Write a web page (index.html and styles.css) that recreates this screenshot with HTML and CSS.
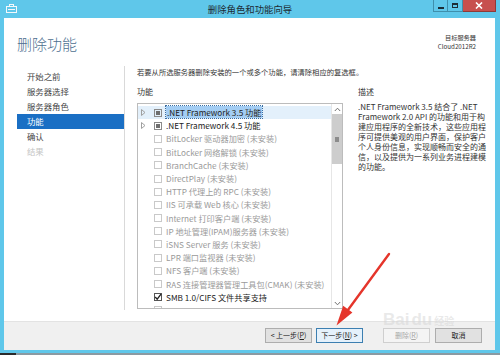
FILE: index.html
```html
<!DOCTYPE html>
<html lang="zh-CN">
<head>
<meta charset="utf-8">
<title>删除角色和功能向导</title>
<link rel="stylesheet" href="styles.css">
</head>
<body>
<div class="window">
  <div class="titlebar">
    <div class="tb-left">
      <svg class="app-icon" width="11" height="9" viewBox="0 0 11 9">
        <rect x="0.5" y="2.5" width="10" height="6" fill="none" stroke="#f4f8fb" stroke-width="1"/>
        <rect x="3.5" y="0.5" width="4" height="2" fill="none" stroke="#f4f8fb" stroke-width="1"/>
        <rect x="2" y="5" width="7" height="1" fill="#f4f8fb"/>
      </svg>
    </div>
    <div class="tb-title">删除角色和功能向导</div>
    <div class="tb-right">
      <div class="wbtn wmin"><span class="glyph-min"></span></div>
      <div class="wbtn wmax"><span class="glyph-max"></span></div>
      <div class="wbtn wclose">
        <svg width="8" height="7" viewBox="0 0 8 7"><path d="M1 0.5 L7 6.5 M7 0.5 L1 6.5" stroke="#fff" stroke-width="1.6"/></svg>
      </div>
    </div>
  </div>

  <div class="client">
    <div class="main">
      <div class="header">
        <h1 class="heading">删除功能</h1>
        <div class="server">
          <div>目标服务器</div>
          <div>Cloud2012R2</div>
        </div>
      </div>
      <div class="body">
        <ul class="nav">
          <li>开始之前</li>
          <li>服务器选择</li>
          <li>服务器角色</li>
          <li class="active">功能</li>
          <li>确认</li>
          <li class="disabled">结果</li>
        </ul>
        <div class="content">
          <p class="intro">若要从所选服务器删除安装的一个或多个功能，请清除相应的复选框。</p>
          <div class="cols">
            <div class="col-list">
              <div class="label">功能</div>
              <div class="listbox">
                <div class="rows">
                  <div class="row selected"><span class="exp"><svg width="5" height="7" viewBox="0 0 5 7"><path d="M0.5 0.5 L4 3.5 L0.5 6.5 Z" fill="none" stroke="#a0a0a0" stroke-width="1"/></svg></span><span class="cb partial"></span><span class="txt"><span class="sel-txt">.NET Framework 3.5 功能</span></span></div>
                  <div class="row"><span class="exp"><svg width="5" height="7" viewBox="0 0 5 7"><path d="M0.5 0.5 L4 3.5 L0.5 6.5 Z" fill="none" stroke="#a0a0a0" stroke-width="1"/></svg></span><span class="cb partial"></span><span class="txt">.NET Framework 4.5 功能</span></div>
                  <div class="row dim"><span class="exp"></span><span class="cb"></span><span class="txt">BitLocker 驱动器加密 (未安装)</span></div>
                  <div class="row dim"><span class="exp"></span><span class="cb"></span><span class="txt">BitLocker 网络解锁 (未安装)</span></div>
                  <div class="row dim"><span class="exp"></span><span class="cb"></span><span class="txt">BranchCache (未安装)</span></div>
                  <div class="row dim"><span class="exp"></span><span class="cb"></span><span class="txt">DirectPlay (未安装)</span></div>
                  <div class="row dim"><span class="exp"></span><span class="cb"></span><span class="txt">HTTP 代理上的 RPC (未安装)</span></div>
                  <div class="row dim"><span class="exp"></span><span class="cb"></span><span class="txt">IIS 可承载 Web 核心 (未安装)</span></div>
                  <div class="row dim"><span class="exp"></span><span class="cb"></span><span class="txt">Internet 打印客户端 (未安装)</span></div>
                  <div class="row dim"><span class="exp"></span><span class="cb"></span><span class="txt">IP 地址管理(IPAM)服务器 (未安装)</span></div>
                  <div class="row dim"><span class="exp"></span><span class="cb"></span><span class="txt">iSNS Server 服务 (未安装)</span></div>
                  <div class="row dim"><span class="exp"></span><span class="cb"></span><span class="txt">LPR 端口监视器 (未安装)</span></div>
                  <div class="row dim"><span class="exp"></span><span class="cb"></span><span class="txt">NFS 客户端 (未安装)</span></div>
                  <div class="row dim"><span class="exp"></span><span class="cb"></span><span class="txt">RAS 连接管理器管理工具包(CMAK) (未安装)</span></div>
                  <div class="row"><span class="exp"></span><span class="cb checked"><svg width="8" height="8" viewBox="0 0 8 8"><path d="M1.2 4 L3.2 6.2 L7 1.2" fill="none" stroke="#222" stroke-width="1.3"/></svg></span><span class="txt">SMB 1.0/CIFS 文件共享支持</span></div>
                  <div class="row dim"><span class="exp"></span><span class="cb"></span></div>
                </div>
                <div class="scrollbar">
                  <div class="sb-btn"><svg width="7" height="5" viewBox="0 0 7 5"><path d="M0.8 4 L3.5 1.2 L6.2 4" fill="none" stroke="#707070" stroke-width="1"/></svg></div>
                  <div class="sb-thumb"><span class="grip"></span></div>
                  <div class="sb-track"></div>
                  <div class="sb-btn"><svg width="7" height="5" viewBox="0 0 7 5"><path d="M0.8 1 L3.5 3.8 L6.2 1" fill="none" stroke="#707070" stroke-width="1"/></svg></div>
                </div>
              </div>
            </div>
            <div class="col-desc">
              <div class="label">描述</div>
              <p class="desc">.NET Framework 3.5 结合了 .NET Framework 2.0 API 的功能和用于构建应用程序的全新技术，这些应用程序可提供美观的用户界面，保护客户个人身份信息，实现顺畅而安全的通信，以及提供为一系列业务进程建模的功能。</p>
            </div>
          </div>
        </div>
      </div>
    </div>
    <div class="footer">
      <div class="btn">&lt; 上一步(<u>P</u>)</div>
      <div class="btn primary">下一步(<u>N</u>) &gt;</div>
      <div class="btn disabled-btn gap-big">删除(<u>R</u>)</div>
      <div class="btn gap-small">取消</div>
    </div>
  </div>
  <div class="taskbar"></div>

  <div class="watermark"><span class="wm-big">Bai</span><span class="wm-du">du</span><span class="wm-small">经验</span></div>

  <svg class="arrow" width="500" height="355" viewBox="0 0 500 355">
    <path d="M389 254 L345 314" stroke="#e5352b" stroke-width="2.4" stroke-linecap="round"/>
    <polygon points="336.5,325.5 343.2,305.8 352.4,312.6" fill="#e5352b"/>
  </svg>
</div>
</body>
</html>
```
FILE: styles.css
```css
* { box-sizing: border-box; }
html, body { margin: 0; padding: 0; }
body {
  width: 500px;
  height: 355px;
  overflow: hidden;
  background: #5fc7ea;
  font-family: "Noto Sans CJK SC", "Noto Sans", sans-serif;
  color: #222;
}
.window {
  position: relative;
  width: 500px;
  height: 355px;
  display: flex;
  flex-direction: column;
}
.titlebar {
  height: 18px;
  display: grid;
  grid-template-columns: 1fr auto 1fr;
  align-items: start;
}
.tb-left { padding: 4px 0 0 6px; }
.app-icon { display: block; }
.tb-title {
  font-size: 9.4px;
  line-height: 18px;
  color: #1d2b33;
}
.tb-right {
  display: flex;
  justify-content: flex-end;
  padding-right: 4px;
}
.wbtn {
  height: 12px;
  display: flex;
  align-items: center;
  justify-content: center;
}
.wmin { width: 15px; border: 1px solid #3f8fac; border-top: 0; }
.wmax { width: 15px; border: 1px solid #3f8fac; border-top: 0; border-left: 0; }
.wclose { width: 33px; background: #c7504e; border: 1px solid #8f3a38; border-top: 0; border-left: 0; }
.glyph-min { width: 6px; height: 2px; background: #1c2d36; margin-top: 4px; }
.glyph-max { width: 6px; height: 5px; border: 1px solid #1c2d36; border-top-width: 2px; }

.client {
  height: 332px;
  margin: 0 5px 0 4px;
  display: flex;
  flex-direction: column;
  background: #fff;
}
.main { flex: 1; }
.header {
  height: 48px;
  display: flex;
  justify-content: space-between;
  align-items: flex-start;
  padding: 0 19px 0 13px;
}
.heading {
  margin: 17px 0 0;
  font-weight: 300;
  font-size: 15px;
  line-height: 18px;
  color: #4d6f8f;
}
.server {
  margin-top: 15px;
  text-align: right;
  font-size: 6.2px;
  line-height: 9px;
  color: #333;
}
.body {
  display: flex;
  height: 244px;
}
.nav {
  list-style: none;
  margin: 0 0 0 13px;
  padding: 3px 0 0;
  width: 108px;
  border-right: 1px solid #d9d9d9;
  font-size: 8.4px;
}
.nav li {
  height: 15px;
  line-height: 15px;
  padding-left: 10px;
  color: #444;
}
.nav li.active { background: #1a6fc4; color: #fff; }
.nav li.disabled { color: #c4c4c4; }
.content {
  flex: 1;
  padding-left: 12px;
}
.intro {
  margin: 0;
  height: 12px;
  font-size: 7.3px;
  line-height: 12px;
  color: #333;
  white-space: nowrap;
}
.cols {
  display: flex;
  gap: 15px;
  margin-top: 8px;
}
.label {
  font-size: 8px;
  line-height: 12px;
  height: 12px;
  color: #333;
}
.col-list { width: 206px; }
.listbox {
  margin-top: 5px;
  height: 206px;
  border: 1px solid #bcbcbc;
  display: flex;
  overflow: hidden;
}
.rows {
  flex: 1;
  padding-top: 2px;
  overflow: hidden;
}
.row {
  height: 13.2px;
  display: flex;
  align-items: center;
  font-size: 8.2px;
  white-space: nowrap;
  color: #222;
}
.row.selected { background: #e3f0fb; }
.row.dim { color: #9a9a9a; }
.exp {
  width: 13px;
  margin-left: 3px;
  display: flex;
  align-items: center;
}
.exp svg { display: block; }
.cb {
  width: 8px;
  height: 8px;
  margin-right: 4px;
  border: 1px solid #c9c9c9;
  flex: none;
  position: relative;
}
.cb.partial { border-color: #8a8a8a; }
.cb.partial::after {
  content: "";
  position: absolute;
  left: 1px; top: 1px; right: 1px; bottom: 1px;
  background: #6e6e6e;
}
.cb.checked { border-color: #555; }
.cb.checked svg { position: absolute; left: -1px; top: -1px; }
.txt { line-height: 13px; }
.sel-txt {
  background: #a3cdf3;
  outline: 1px dotted #3a6da0;
  padding: 0 1px;
}
.scrollbar {
  width: 11px;
  border-left: 1px solid #e6e6e6;
  display: flex;
  flex-direction: column;
  background: #fff;
}
.sb-btn {
  height: 10px;
  display: flex;
  align-items: center;
  justify-content: center;
}
.sb-thumb {
  height: 50px;
  background: #cdcdcd;
  display: flex;
  align-items: center;
  justify-content: center;
}
.grip { width: 4px; height: 5px; background: #8c8c8c; }
.sb-track { flex: 1; }
.col-desc { width: 131px; }
.desc {
  margin: 4px 0 0;
  font-size: 8px;
  line-height: 10px;
  color: #333;
}
.footer {
  height: 29px;
  background: #f0f0f0;
  border-top: 1px solid #e3e3e3;
  display: flex;
  justify-content: flex-end;
  align-items: flex-start;
  padding: 6px 13px 0 0;
}
.btn {
  width: 47px;
  height: 15px;
  margin-left: 4px;
  border: 1px solid #adadad;
  background: #e1e1e1;
  font-size: 7px;
  line-height: 13px;
  text-align: center;
  color: #222;
}
.btn.primary { border-color: #3c7fb1; background: #e5f1fb; }
.btn.disabled-btn { background: #f4f4f4; border-color: #cfcfcf; color: #a8a8a8; }
.gap-big { margin-left: 20px; }
.gap-small { margin-left: 5px; }
.taskbar {
  margin-top: 3px;
  height: 2px;
  background: linear-gradient(to right, #2b2b2b 0 16px, #8a9aa2 16px);
}
.watermark {
  position: absolute;
  left: 383px;
  top: 311px;
  display: flex;
  align-items: baseline;
  line-height: 1;
  font-family: "Liberation Sans", sans-serif;
  font-weight: bold;
  color: rgba(215, 215, 215, 0.55);
  pointer-events: none;
}
.wm-big { font-size: 17px; }
.wm-du { font-size: 17px; margin-left: 2px; }
.wm-small { font-family: "Noto Sans CJK SC", sans-serif; font-size: 10px; margin-left: 2px; }
.arrow {
  position: absolute;
  left: 0;
  top: 0;
  pointer-events: none;
}
```
